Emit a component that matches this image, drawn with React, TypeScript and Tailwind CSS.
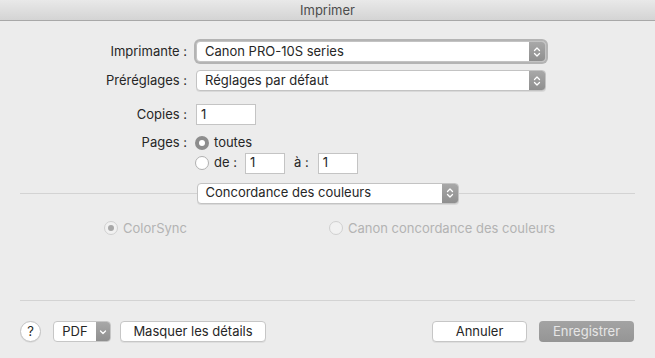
import React from 'react';

function Stepper() {
  return (
    <svg width="8" height="12" viewBox="0 0 8 12" fill="none" stroke="white" strokeWidth={1.3} strokeLinecap="round" strokeLinejoin="round">
      <path d="M1.5 4.5 4 2l2.5 2.5" />
      <path d="M1.5 7.5 4 10l2.5-2.5" />
    </svg>
  );
}

function Popup({ value, width, focused }: { value: string; width: string; focused?: boolean }) {
  return (
    <div
      className={`flex h-[21px] ${width} items-stretch rounded-[4px] border border-[#c3c3c3] bg-white ${
        focused ? 'ring-[2px] ring-[#b4b4b4]' : ''
      } shadow-[0_1px_0_rgba(0,0,0,0.08)]`}
    >
      <div className="flex flex-1 items-center pl-[8px] text-[13px] text-[#262626]">{value}</div>
      <div className="flex w-[16px] items-center justify-center rounded-r-[3px] bg-gradient-to-b from-[#a8a8a8] to-[#8f8f8f]">
        <Stepper />
      </div>
    </div>
  );
}

function Field({ value, width }: { value: string; width: string }) {
  return (
    <div className={`flex h-[21px] ${width} items-center border border-[#c4c4c4] bg-white pl-[4px] text-[13px] text-[#262626]`}>
      {value}
    </div>
  );
}

function Radio({ checked, disabled }: { checked?: boolean; disabled?: boolean }) {
  if (disabled) {
    return (
      <span className="flex h-[14px] w-[14px] items-center justify-center rounded-full border border-[#d0d0d0] bg-[#f1f1f1]">
        {checked && <span className="h-[6px] w-[6px] rounded-full bg-[#a8a8a8]" />}
      </span>
    );
  }
  if (checked) {
    return (
      <span className="flex h-[14px] w-[14px] items-center justify-center rounded-full bg-[#8d8d8d]">
        <span className="h-[6px] w-[6px] rounded-full bg-white" />
      </span>
    );
  }
  return <span className="h-[14px] w-[14px] rounded-full border border-[#b0b0b0] bg-white" />;
}

function Label({ children }: { children: React.ReactNode }) {
  return <div className="w-[188px] shrink-0 pr-[1px] text-right text-[13px] text-[#262626]">{children}</div>;
}

function Button({ children, className = '' }: { children: React.ReactNode; className?: string }) {
  return (
    <div
      className={`flex h-[21px] items-center justify-center rounded-[4px] border border-[#c6c6c6] bg-white text-[13px] text-[#262626] shadow-[0_1px_0_rgba(0,0,0,0.06)] ${className}`}
    >
      {children}
    </div>
  );
}

export default function App() {
  return (
    <div className="flex h-[358px] w-[655px] flex-col bg-[#ececec] font-['Inter','Liberation_Sans',sans-serif]">
      {/* Title bar */}
      <div className="flex h-[21px] shrink-0 items-center justify-center border-b border-[#a8a8a8] bg-gradient-to-b from-[#e9e9e9] to-[#d4d4d4] pt-[1px] text-[13px] text-[#4d4d4d]">
        Imprimer
      </div>

      {/* Printer + presets */}
      <div className="mt-[20px] flex items-center gap-[8px]">
        <Label>Imprimante :</Label>
        <Popup value="Canon PRO-10S series" width="w-[350px]" focused />
      </div>
      <div className="mt-[8px] flex items-center gap-[8px]">
        <Label>Préréglages :</Label>
        <Popup value="Réglages par défaut" width="w-[350px]" />
      </div>

      {/* Copies and pages */}
      <div className="mt-[13px] flex items-center gap-[8px]">
        <Label>Copies :</Label>
        <Field value="1" width="w-[60px]" />
      </div>
      <div className="mt-[8px] flex items-center gap-[7px]">
        <Label>Pages :</Label>
        <div className="flex items-center gap-[5px] text-[13px] text-[#262626]">
          <Radio checked />
          <span>toutes</span>
        </div>
      </div>
      <div className="flex items-center gap-[7px]">
        <div className="w-[188px] shrink-0" />
        <div className="flex items-center text-[13px] text-[#262626]">
          <Radio />
          <span className="ml-[5px]">de :</span>
          <div className="ml-[8px]">
            <Field value="1" width="w-[40px]" />
          </div>
          <span className="ml-[9px]">à :</span>
          <div className="ml-[9px]">
            <Field value="1" width="w-[40px]" />
          </div>
        </div>
      </div>

      {/* Section popup */}
      <div className="mt-[9px] flex items-center px-[20px]">
        <div className="h-px flex-1 bg-[#d3d3d3]" />
        <Popup value="Concordance des couleurs" width="w-[262px]" />
        <div className="h-px flex-1 bg-[#d3d3d3]" />
      </div>

      {/* Color matching options */}
      <div className="mt-[15px] flex items-center pl-[104px] text-[13px] text-[#b3b3b3]">
        <div className="flex w-[225px] items-center gap-[5px]">
          <Radio checked disabled />
          <span>ColorSync</span>
        </div>
        <div className="flex items-center gap-[5px]">
          <Radio disabled />
          <span>Canon concordance des couleurs</span>
        </div>
      </div>

      <div className="flex-1" />

      {/* Bottom separator */}
      <div className="mx-[20px] h-px bg-[#d3d3d3]" />

      {/* Buttons */}
      <div className="mb-[16px] mt-[20px] flex items-center pl-[20px] pr-[21px]">
        <div className="flex h-[21px] w-[21px] items-center justify-center rounded-full border border-[#c2c2c2] bg-white text-[13px] text-[#262626] shadow-[0_1px_0_rgba(0,0,0,0.06)]">
          ?
        </div>
        <div className="ml-[12px] flex h-[21px] w-[58px] items-stretch rounded-[4px] border border-[#c6c6c6] bg-white text-[13px] text-[#262626]">
          <div className="flex flex-1 items-center justify-center">PDF</div>
          <div className="flex w-[14px] items-center justify-center rounded-r-[3px] bg-gradient-to-b from-[#a8a8a8] to-[#8f8f8f]">
            <svg width="8" height="6" viewBox="0 0 8 6" fill="none" stroke="white" strokeWidth={1.3} strokeLinecap="round" strokeLinejoin="round">
              <path d="M1.5 2 4 4.5 6.5 2" />
            </svg>
          </div>
        </div>
        <Button className="ml-[9px] w-[146px]">Masquer les détails</Button>
        <div className="flex-1" />
        <Button className="w-[95px]">Annuler</Button>
        <div className="ml-[12px] flex h-[21px] w-[95px] items-center justify-center rounded-[4px] bg-gradient-to-b from-[#a3a3a3] to-[#959595] text-[13px] text-[#e6e6e6]">
          Enregistrer
        </div>
      </div>
    </div>
  );
}
